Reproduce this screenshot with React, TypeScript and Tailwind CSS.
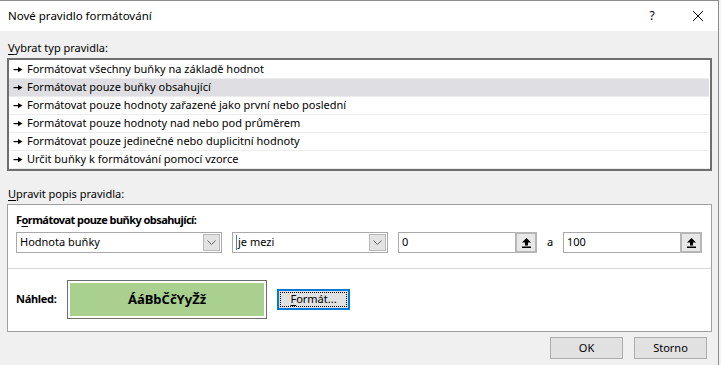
import React from 'react';

const font = { fontFamily: '"Noto Sans", "Open Sans", sans-serif' };

const rules = [
  'Formátovat všechny buňky na základě hodnot',
  'Formátovat pouze buňky obsahující',
  'Formátovat pouze hodnoty zařazené jako první nebo poslední',
  'Formátovat pouze hodnoty nad nebo pod průměrem',
  'Formátovat pouze jedinečné nebo duplicitní hodnoty',
  'Určit buňky k formátování pomocí vzorce',
];

function Pointer() {
  return (
    <svg width="10" height="7" viewBox="0 0 10 7" className="shrink-0">
      <rect x="0.5" y="3" width="5" height="1.2" fill="#000" />
      <path d="M5 1 L9.5 3.6 L5 6.2 Z" fill="#000" />
    </svg>
  );
}

function Chevron() {
  return (
    <svg width="9" height="5" viewBox="0 0 9 5">
      <path d="M0.5 0.5 L4.5 4.5 L8.5 0.5" fill="none" stroke="#606060" strokeWidth="1" />
    </svg>
  );
}

function UpArrow() {
  return (
    <svg width="9" height="10" viewBox="0 0 9 10">
      <path d="M4.5 0 L9 4.5 L6 4.5 L6 7.5 L3 7.5 L3 4.5 L0 4.5 Z" fill="#000" />
      <rect x="0" y="8.5" width="9" height="1.5" fill="#000" />
    </svg>
  );
}

function Select({ value, width, caret }: { value: string; width: string; caret?: boolean }) {
  return (
    <div className={`${width} h-[21px] border border-[#a9a9a9] bg-white flex items-center`}>
      <div className="flex-1 flex items-center pl-[3px] text-[11px] text-black">
        {caret && <span className="w-px h-[15px] bg-[#3b82d6] mr-[1px]" />}
        {value}
      </div>
      <div className="w-[17px] h-[17px] mr-px bg-[#e3e3e3] border border-[#b8b8b8] flex items-center justify-center">
        <Chevron />
      </div>
    </div>
  );
}

function Spin({ value }: { value: string }) {
  return (
    <div className="w-[139px] h-[21px] border border-[#a9a9a9] bg-white flex items-center">
      <div className="flex-1 pl-[3px] text-[11px] text-black">{value}</div>
      <div className="w-[22px] h-[21px] -mr-px border-2 border-[#b6b6b6] bg-[#e8e8e8] flex items-center justify-center">
        <UpArrow />
      </div>
    </div>
  );
}

export default function App() {
  return (
    <div className="w-[721px] h-[365px] flex bg-[#e9e9e9] overflow-hidden" style={font}>
      <div className="w-[719px] h-full flex flex-col border-t border-r border-[#8c8c8c] bg-[#f0f0f0]">
        {/* title bar */}
        <div className="h-[30px] bg-white flex items-center pl-[8px] text-[11.5px] text-black">
          <span className="flex-1">Nové pravidlo formátování</span>
          <span className="w-[14px] text-center text-[12px] mr-[33px]">?</span>
          <svg width="12" height="12" viewBox="0 0 12 12" className="mr-[14px]">
            <path d="M1 1 L11 11 M11 1 L1 11" stroke="#000" strokeWidth="1" />
          </svg>
        </div>

        <div className="flex-1 flex flex-col pl-[7px] pr-[6px]">
          <div className="mt-[9px] pl-px h-[16px] leading-[16px] text-[11px] text-black">
            <span className="underline underline-offset-2">V</span>ybrat typ pravidla:
          </div>

          {/* rule list */}
          <div className="mt-[2px] h-[113px] border-2 border-[#6f6f6f] bg-white pt-px pr-px">
            {rules.map((r, i) => (
              <div
                key={r}
                className={`h-[18px] flex items-center gap-[4px] pl-[4px] text-[11px] text-black border-b border-[#ececec] ${
                  i === 1 ? 'bg-[#dedee3]' : ''
                }`}
              >
                <Pointer />
                <span>{r}</span>
              </div>
            ))}
          </div>

          <div className="mt-[15px] pl-px h-[16px] leading-[16px] text-[11px] text-black">
            <span className="underline underline-offset-2">U</span>pravit popis pravidla:
          </div>

          {/* rule description */}
          <div className="mt-[2px] h-[128px] border border-[#a0a0a0] bg-white flex flex-col">
            <div className="pl-[8px] pt-[7px] h-[16px] box-content leading-[16px] text-[11px] font-bold tracking-[-0.55px] text-black">
              F<span className="underline underline-offset-2">o</span>rmátovat pouze buňky obsahující:
            </div>
            <div className="mt-[4px] pl-[8px] flex items-center">
              <Select value="Hodnota buňky" width="w-[206px]" />
              <div className="w-[10px]" />
              <Select value="je mezi" width="w-[156px]" caret />
              <div className="w-[10px]" />
              <Spin value="0" />
              <span className="w-[26px] text-center text-[11px] text-black">a</span>
              <Spin value="100" />
            </div>
            <div className="mt-[15px] h-px bg-[#d6d6d6]" />
            <div className="flex-1 flex items-center pl-[8px] pb-[1px]">
              <span className="w-[51px] text-[11px] font-bold tracking-[-0.3px] text-black">Náhled:</span>
              <div className="w-[200px] h-[39px] border border-[#6d6d6d] bg-white p-[2px]">
                <div className="w-full h-full bg-[#a9d08e] flex items-center justify-center text-[13px] font-bold text-black">
                  ÁáBbČčYyŽž
                </div>
              </div>
              <div className="ml-[10px] w-[73px] h-[21px] border-2 border-[#0078d7] bg-[#e1e1e1] p-px">
                <div className="w-full h-full border border-dotted border-black flex items-center justify-center text-[11px] text-black">
                  <span className="underline underline-offset-2">F</span>ormát...
                </div>
              </div>
            </div>
          </div>

          {/* buttons */}
          <div className="mt-[5px] flex justify-end gap-[11px] pr-[5px]">
            <button className="w-[73px] h-[22px] border border-[#adadad] bg-[#e1e1e1] text-[11px] text-black">
              OK
            </button>
            <button className="w-[73px] h-[22px] border border-[#adadad] bg-[#e1e1e1] text-[11px] text-black">
              Storno
            </button>
          </div>
        </div>
      </div>
      <div className="flex-1 h-full bg-[#f4f4f4]" />
    </div>
  );
}
